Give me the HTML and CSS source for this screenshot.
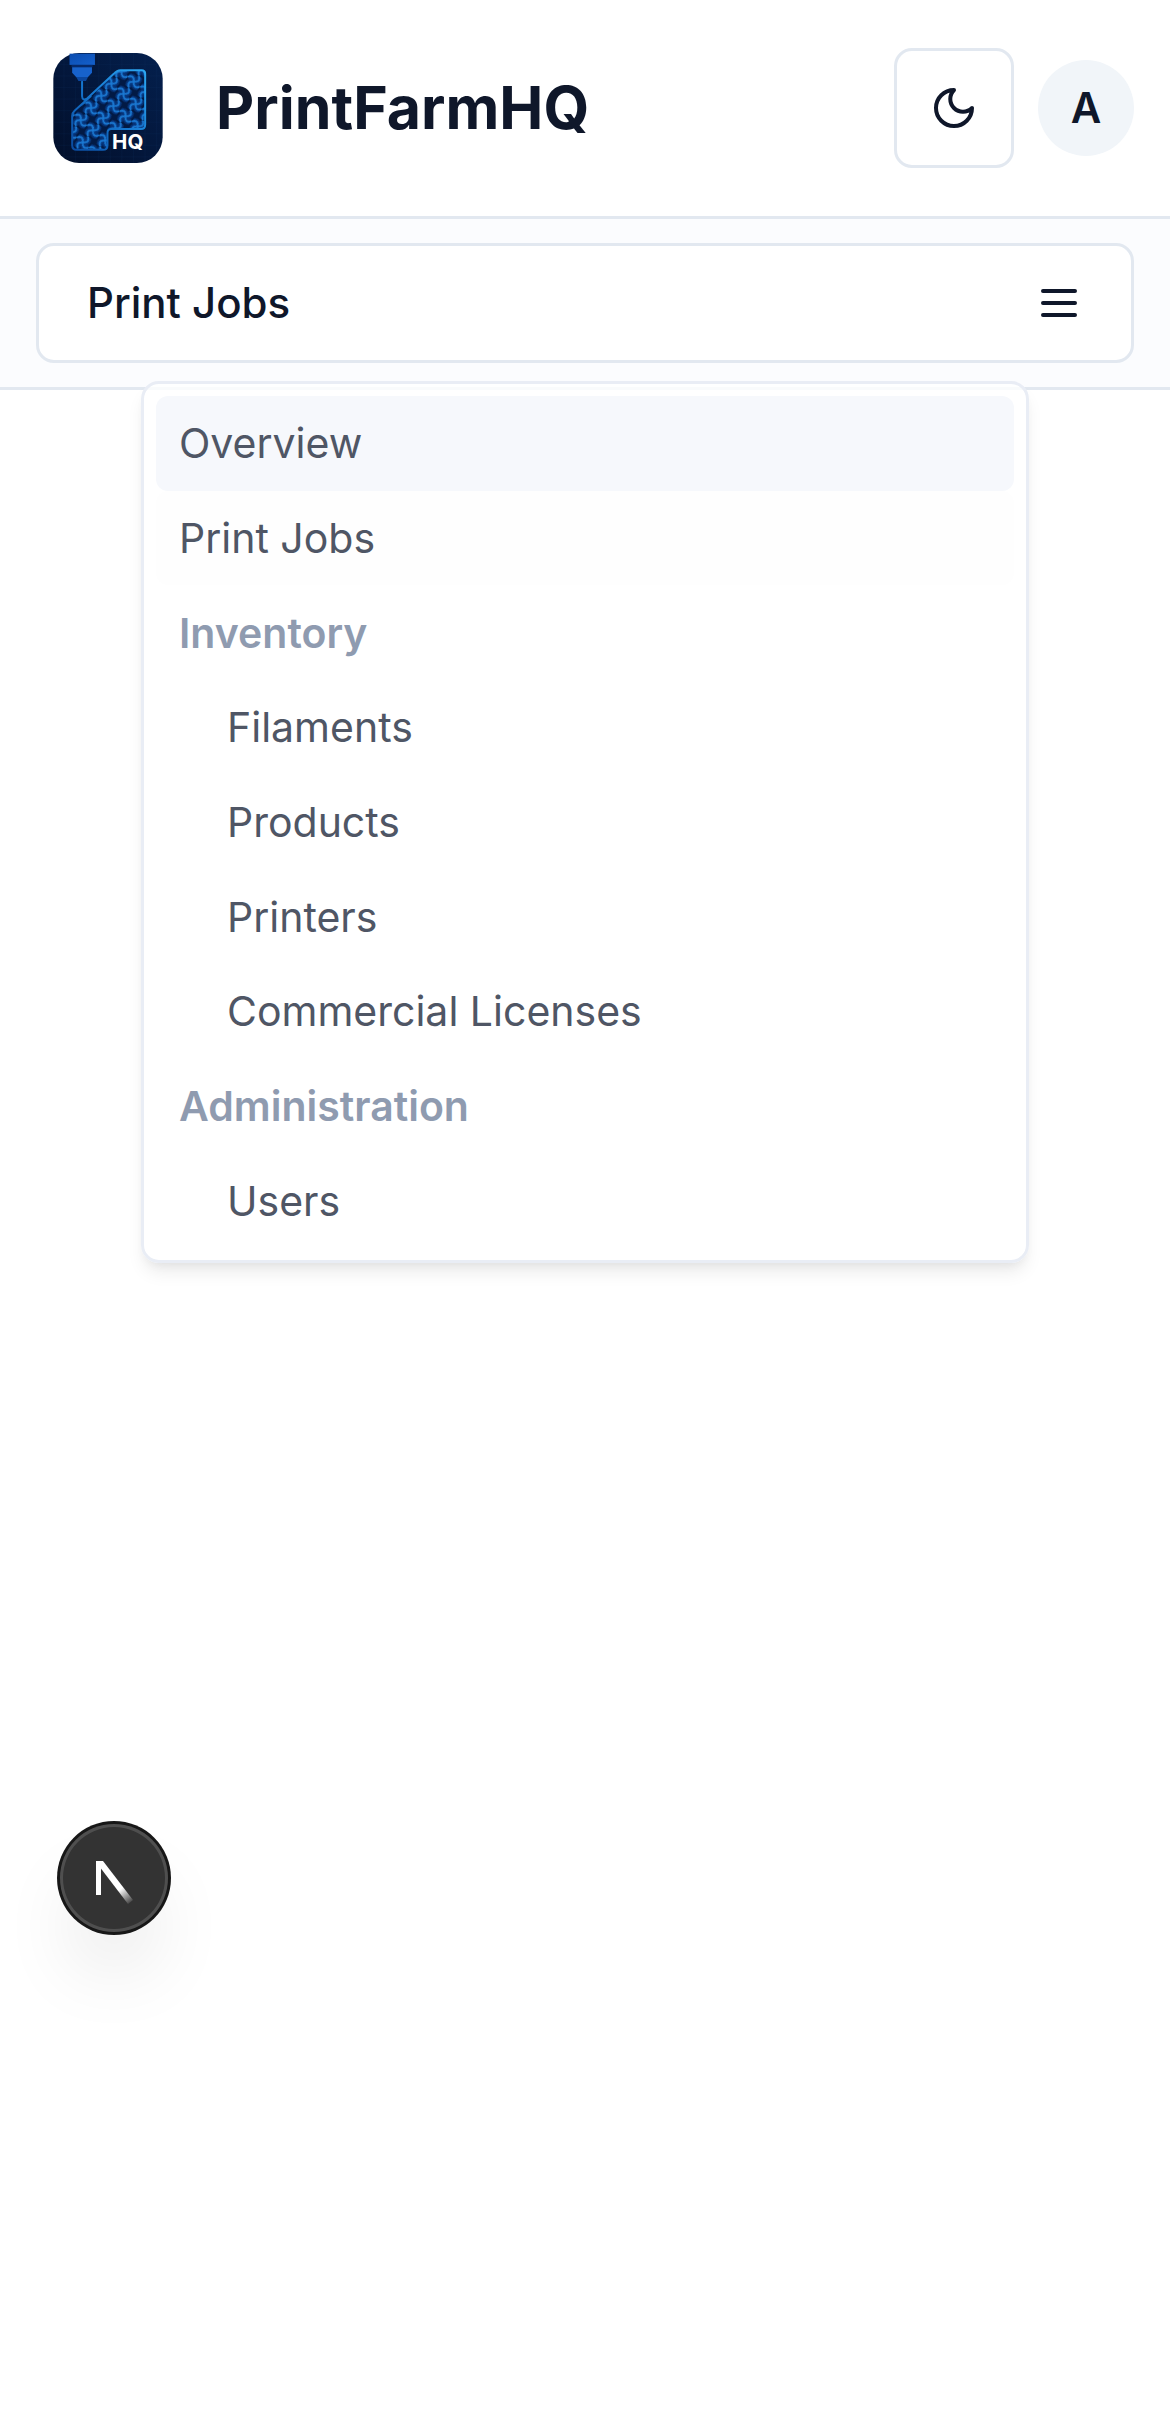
FILE: index.html
```html
<!DOCTYPE html>
<html lang="en">
<head>
<meta charset="utf-8">
<meta name="viewport" content="width=device-width, initial-scale=1">
<title>PrintFarmHQ</title>
<link rel="stylesheet" href="styles.css">
</head>
<body>
<header class="header">
  <a class="brand" href="#">
    <svg class="logo" viewBox="39 37 331 333" aria-hidden="true">
      <defs>
        <linearGradient id="bg" x1="0" y1="1" x2="1" y2="0">
          <stop offset="0" stop-color="#020f2a"/><stop offset=".5" stop-color="#03173c"/><stop offset="1" stop-color="#04204e"/>
        </linearGradient>
        <linearGradient id="edge" x1="0" y1="1" x2="1" y2="0">
          <stop offset="0" stop-color="#0a4ba0"/><stop offset=".5" stop-color="#1577d0"/><stop offset="1" stop-color="#2da8f2"/>
        </linearGradient>
        <linearGradient id="metal" x1="0" y1="0" x2="1" y2="1">
          <stop offset="0" stop-color="#0b4cae"/><stop offset="1" stop-color="#1460cc"/>
        </linearGradient>
        <pattern id="grid" width="35" height="35" patternUnits="userSpaceOnUse">
          <path d="M0 0H35M0 0V35" stroke="#0c3468" stroke-width="2" opacity=".4" fill="none"/>
        </pattern>
        <pattern id="infill" width="48" height="48" patternUnits="userSpaceOnUse" patternTransform="translate(215 130) rotate(40) translate(-24 -24)">
          <rect width="48" height="48" fill="#021a45"/>
          <g fill="none">
            <path d="M0 24Q12 6 24 24T48 24M24 0Q42 12 24 24T24 48" stroke="#06357c" stroke-width="17"/>
            <path d="M0 24Q12 6 24 24T48 24M24 0Q42 12 24 24T24 48" stroke="#1a78d2" stroke-width="6"/>
          </g>
        </pattern>
      </defs>
      <rect x="39" y="37" width="331" height="333" rx="78" fill="url(#bg)"/>
      <rect x="39" y="37" width="331" height="333" rx="78" fill="url(#grid)"/>
      <path d="M88 39H165V73H88Z" fill="url(#metal)"/>
      <path d="M94 73H158V80H94Z" fill="#062a6b"/>
      <path d="M96 80H156V97L144 110H108L96 97Z" fill="#1762cc"/>
      <path d="M108 110H144L138 122H115Z" fill="#0b479f"/>
      <path d="M96 228Q96 218 104 211L156 168L222 100Q232 89 242 89H306Q317 89 317 100V254Q317 267 304 267H214Q203 267 203 279V316Q203 330 189 330H110Q96 330 96 316Z" fill="url(#infill)"/>
      <path d="M126 124V168Q127 184 142 174L222 100Q232 89 242 89H306Q317 89 317 100V254Q317 267 304 267H214Q203 267 203 279V316Q203 330 189 330H110Q96 330 96 316V228Q96 218 104 211L152 168" fill="none" stroke="url(#edge)" stroke-width="6" stroke-linecap="round"/>
      <text class="logo-text" x="217" y="328">HQ</text>
    </svg>
    <span class="brand-name">PrintFarmHQ</span>
  </a>
  <div class="actions">
    <button class="theme-button" type="button" aria-label="Toggle theme">
      <svg class="icon" viewBox="0 0 24 24" aria-hidden="true"><path d="M12 3a6 6 0 0 0 9 9 9 9 0 1 1-9-9Z"/></svg>
    </button>
    <button class="avatar" type="button" aria-label="Account">A</button>
  </div>
</header>
<nav class="nav">
  <button class="nav-trigger" type="button" aria-haspopup="true" aria-expanded="true">
    <span>Print Jobs</span>
    <svg class="icon" viewBox="0 0 24 24" aria-hidden="true"><path d="M4 12h16M4 6h16M4 18h16"/></svg>
  </button>
  <div class="menu">
    <a class="menu-item menu-item-active" href="#">Overview</a>
    <a class="menu-item menu-item-current" href="#">Print Jobs</a>
    <div class="menu-item menu-label">Inventory</div>
    <a class="menu-item menu-item-nested" href="#">Filaments</a>
    <a class="menu-item menu-item-nested" href="#">Products</a>
    <a class="menu-item menu-item-nested" href="#">Printers</a>
    <a class="menu-item menu-item-nested" href="#">Commercial Licenses</a>
    <div class="menu-item menu-label">Administration</div>
    <a class="menu-item menu-item-nested" href="#">Users</a>
  </div>
</nav>
<button class="dev-badge" type="button" aria-label="Open dev tools">
  <svg class="dev-mark" viewBox="0 0 108 108" aria-hidden="true">
    <defs>
      <linearGradient id="fade" gradientUnits="userSpaceOnUse" x1="62" y1="64" x2="73" y2="79">
        <stop offset="0" stop-color="#fff"/><stop offset="1" stop-color="#fff" stop-opacity="0"/>
      </linearGradient>
    </defs>
    <path d="M36 37H41V71H36Z" fill="#fff"/>
    <path d="M36 37H43L73 76L68 80L36 38Z" fill="url(#fade)"/>
  </svg>
</button>
</body>
</html>
```
FILE: styles.css
```css
* {
  box-sizing: border-box;
}

body {
  margin: 0;
  min-height: 100vh;
  background: #fff;
  color: #0f172a;
  font-family: Inter, "Liberation Sans", sans-serif;
  font-size: 42px;
  line-height: 60px;
}

button {
  margin: 0;
  padding: 0;
  border: 0;
  background: none;
  color: inherit;
  font: inherit;
}

a {
  color: inherit;
  text-decoration: none;
}

.icon {
  width: 48px;
  height: 48px;
  fill: none;
  stroke: currentColor;
  stroke-width: 2;
  stroke-linecap: round;
  stroke-linejoin: round;
}

.header {
  display: flex;
  align-items: center;
  justify-content: space-between;
  padding: 48px 36px 48px 53px;
  border-bottom: 3px solid #e2e8f0;
}

.brand {
  display: flex;
  align-items: center;
  gap: 53px;
}

.logo {
  width: 110px;
  height: 110px;
}

.logo-text {
  fill: #fff;
  font-size: 62px;
  font-weight: 700;
}

.brand-name {
  font-size: 59px;
  font-weight: 700;
}

.actions {
  display: flex;
  align-items: center;
  gap: 24px;
}

.theme-button {
  display: grid;
  place-items: center;
  width: 120px;
  height: 120px;
  border: 3px solid #e2e8f0;
  border-radius: 18px;
}

.avatar {
  width: 96px;
  height: 96px;
  border-radius: 50%;
  background: #f1f5f9;
  font-weight: 600;
}

.nav {
  position: relative;
  padding: 24px 36px;
  border-bottom: 3px solid #e2e8f0;
  background: #fbfcfe;
}

.nav-trigger {
  display: flex;
  align-items: center;
  justify-content: space-between;
  width: 100%;
  height: 120px;
  padding: 0 48px;
  border: 3px solid #e2e8f0;
  border-radius: 18px;
  background: #fff;
  font-weight: 500;
}

.menu {
  position: absolute;
  top: 162px;
  left: 50%;
  transform: translateX(-50%);
  display: grid;
  grid-auto-rows: 1fr;
  width: 888px;
  min-height: 882px;
  padding: 12px;
  border: 3px solid #e9edf5;
  border-radius: 18px;
  background: rgb(255 255 255 / 80%);
  box-shadow: 0 12px 18px -3px rgb(0 0 0 / 8%), 0 6px 12px -6px rgb(0 0 0 / 8%);
  color: #4f5665;
  font-size: 41px;
}

.menu-item {
  display: flex;
  align-items: center;
  padding: 0 23px;
  border-radius: 12px;
}

.menu-item-active {
  background: #f6f8fc;
}

.menu-item-current {
  background: #fefefe;
}

.menu-item-nested {
  padding-left: 71px;
}

.menu-label {
  color: #8f9bb0;
  font-weight: 600;
}

.dev-badge {
  position: fixed;
  bottom: 498px;
  left: 60px;
  width: 108px;
  height: 108px;
  border-radius: 50%;
  background: #333;
  box-shadow: 0 0 0 3px #171717, inset 0 0 0 3px rgb(255 255 255 / 14%), 0 48px 84px -24px rgb(0 0 0 / 20%);
}

.dev-mark {
  display: block;
  width: 108px;
  height: 108px;
}
```
